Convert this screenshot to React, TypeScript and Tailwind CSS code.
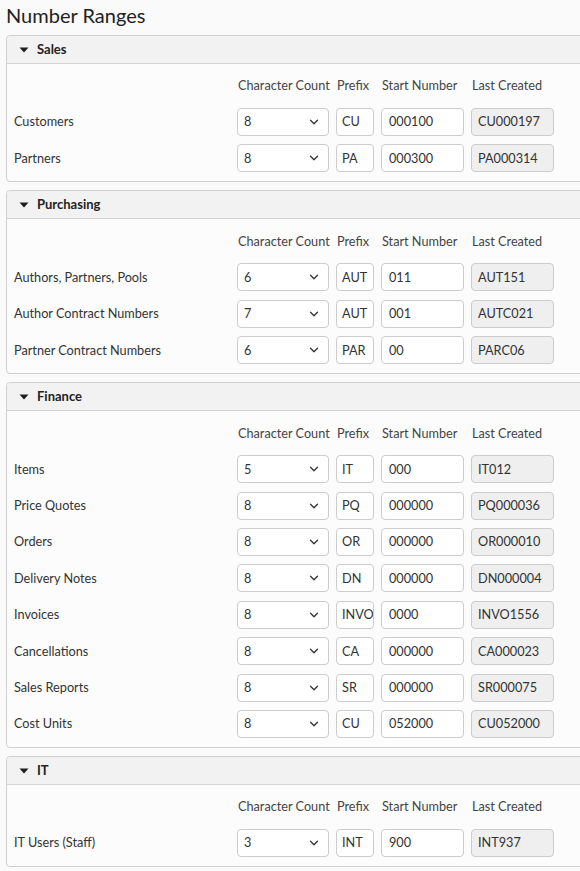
import { ChevronDown } from 'lucide-react';

interface Range {
  label: string;
  count: string;
  prefix: string;
  start: string;
  last: string;
}

interface Section {
  title: string;
  rows: Range[];
}

const sections: Section[] = [
  {
    title: 'Sales',
    rows: [
      { label: 'Customers', count: '8', prefix: 'CU', start: '000100', last: 'CU000197' },
      { label: 'Partners', count: '8', prefix: 'PA', start: '000300', last: 'PA000314' },
    ],
  },
  {
    title: 'Purchasing',
    rows: [
      { label: 'Authors, Partners, Pools', count: '6', prefix: 'AUT', start: '011', last: 'AUT151' },
      { label: 'Author Contract Numbers', count: '7', prefix: 'AUT', start: '001', last: 'AUTC021' },
      { label: 'Partner Contract Numbers', count: '6', prefix: 'PAR', start: '00', last: 'PARC06' },
    ],
  },
  {
    title: 'Finance',
    rows: [
      { label: 'Items', count: '5', prefix: 'IT', start: '000', last: 'IT012' },
      { label: 'Price Quotes', count: '8', prefix: 'PQ', start: '000000', last: 'PQ000036' },
      { label: 'Orders', count: '8', prefix: 'OR', start: '000000', last: 'OR000010' },
      { label: 'Delivery Notes', count: '8', prefix: 'DN', start: '000000', last: 'DN000004' },
      { label: 'Invoices', count: '8', prefix: 'INVO', start: '0000', last: 'INVO1556' },
      { label: 'Cancellations', count: '8', prefix: 'CA', start: '000000', last: 'CA000023' },
      { label: 'Sales Reports', count: '8', prefix: 'SR', start: '000000', last: 'SR000075' },
      { label: 'Cost Units', count: '8', prefix: 'CU', start: '052000', last: 'CU052000' },
    ],
  },
  {
    title: 'IT',
    rows: [
      { label: 'IT Users (Staff)', count: '3', prefix: 'INT', start: '900', last: 'INT937' },
    ],
  },
];

const grid = 'grid grid-cols-[216px_92px_38px_83px_83px] gap-x-[7px] items-center';

function Panel({ section }: { section: Section }) {
  return (
    <div className="w-[620px] border border-[#cfcfcf] rounded-[4px] bg-[#fcfcfc]">
      <div className="h-[28px] flex items-center gap-[8px] pl-[12px] bg-[#f2f2f2] border-b border-[#d4d4d4] rounded-t-[4px]">
        <svg width="10" height="6" viewBox="0 0 10 6" className="mt-[1px]">
          <path d="M0.5 0.5h9L5 5.5z" fill="#1f1f1f" />
        </svg>
        <span className="text-[13px] font-bold text-[#222]">{section.title}</span>
      </div>
      <div className="pl-[7px] pt-[12px] pb-[9px]">
        <div className={`${grid} h-[20px] text-[12.7px] text-[#444]`}>
          <span />
          <span className="pl-[1px] whitespace-nowrap">Character Count</span>
          <span className="pl-[1px]">Prefix</span>
          <span className="pl-[1px] whitespace-nowrap">Start Number</span>
          <span className="pl-[1px] whitespace-nowrap">Last Created</span>
        </div>
        <div className="mt-[12px] flex flex-col gap-[8.4px]">
          {section.rows.map((r) => (
            <div key={r.label} className={`${grid} text-[12.7px] text-[#333]`}>
              <span className="whitespace-nowrap">{r.label}</span>
              <div className="h-[28px] rounded-[4px] border border-[#cccccc] bg-white flex items-center justify-between pl-[6px] pr-[7px]">
                <span>{r.count}</span>
                <ChevronDown className="w-[14px] h-[14px] text-[#333]" strokeWidth={2.2} />
              </div>
              <div className="h-[28px] rounded-[4px] border border-[#cccccc] bg-white flex items-center pl-[5px] overflow-hidden whitespace-nowrap">
                {r.prefix}
              </div>
              <div className="h-[28px] rounded-[4px] border border-[#cccccc] bg-white flex items-center pl-[7px]">
                {r.start}
              </div>
              <div className="h-[28px] rounded-[4px] border border-[#cccccc] bg-[#efefef] flex items-center pl-[6px]">
                {r.last}
              </div>
            </div>
          ))}
        </div>
      </div>
    </div>
  );
}

export default function App() {
  return (
    <div
      className="min-h-[871px] w-[580px] overflow-hidden bg-[#fafafa] text-[#222]"
      style={{ fontFamily: 'Lato, "Open Sans", sans-serif' }}
    >
      <h1 className="h-[35px] pl-[6px] pt-[2px] text-[20px] leading-[26px] text-[#222] font-normal">
        Number Ranges
      </h1>
      <div className="pl-[6px] flex flex-col gap-[8px]">
        {sections.map((s) => (
          <Panel key={s.title} section={s} />
        ))}
      </div>
    </div>
  );
}
